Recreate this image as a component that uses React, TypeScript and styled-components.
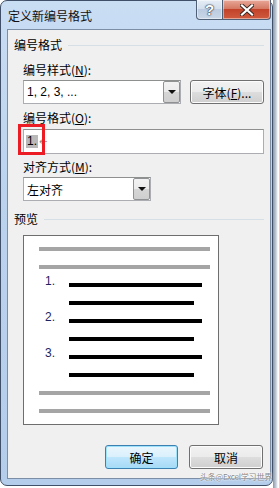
import React from "react";
import styled, { createGlobalStyle } from "styled-components";

const GlobalStyle = createGlobalStyle`
  html, body {
    margin: 0;
    padding: 0;
    background: #ffffff;
  }
  body {
    font-family: "Noto Sans CJK SC", "Liberation Sans", sans-serif;
    font-size: 12px;
    color: #000;
  }
`;

const Screen = styled.div`
  width: 279px;
  height: 488px;
  display: flex;
  overflow: hidden;
  background: #ffffff;
`;

const Window = styled.div`
  position: relative;
  width: 273px;
  height: 486px;
  box-sizing: border-box;
  border: 1px solid #3f5068;
  border-radius: 7px;
  background: linear-gradient(180deg, #c9ddf3 0%, #bcd3ee 40%, #b4cdea 100%);
  display: flex;
  flex-direction: column;
  flex-shrink: 0;
`;

const Backdrop = styled.div`
  flex: 1;
  background: linear-gradient(90deg, #8a98a8 0px, #c3ccd6 3px, #ffffff 5px);
`;

const TitleBar = styled.div`
  height: 28px;
  display: flex;
  align-items: flex-start;
  justify-content: space-between;
  padding-left: 7px;
`;

const Title = styled.div`
  font-size: 12px;
  line-height: 14px;
  margin-top: 8px;
  color: #111;
`;

const Captions = styled.div`
  display: flex;
  margin-top: -1px;
  margin-right: 1px;
`;

const CaptionButton = styled.div<{ $close?: boolean }>`
  height: 20px;
  box-sizing: border-box;
  width: ${(p) => (p.$close ? "48px" : "27px")};
  border: 1px solid #4f5f75;
  border-top: none;
  border-left-width: ${(p) => (p.$close ? "0" : "1px")};
  border-radius: ${(p) => (p.$close ? "0 0 4px 0" : "0 0 0 4px")};
  background: ${(p) =>
    p.$close
      ? "linear-gradient(180deg, #e9a899 0%, #d47a65 45%, #c2432a 50%, #d05a3e 100%)"
      : "linear-gradient(180deg, #e6eef7 0%, #d3dfec 45%, #bccbdf 50%, #c9d7e8 100%)"};
  display: flex;
  align-items: center;
  justify-content: center;
  box-shadow: inset 0 0 0 1px rgba(255, 255, 255, 0.45);
`;

const HelpMark = styled.span`
  font-family: "Liberation Sans", sans-serif;
  font-weight: bold;
  font-size: 15px;
  line-height: 16px;
  color: #ffffff;
  text-shadow: 0 0 1px #2c3b50, 0 0 1px #2c3b50, 0 0 2px #2c3b50;
`;

const Client = styled.div`
  flex: 1;
  margin: 0 1px 6px 6px;
  border: 1px solid #7b8ea6;
  background: #f0f0f0;
  display: flex;
  flex-direction: column;
  padding: 8px 6px 9px 6px;
`;

const GroupHeader = styled.div`
  display: flex;
  align-items: center;
  gap: 6px;
  line-height: 14px;
  height: 14px;
  &::after {
    content: "";
    flex: 1;
    height: 1px;
    background: #d5dfe5;
  }
`;

const Section = styled.div`
  padding-left: 9px;
  display: flex;
  flex-direction: column;
`;

const Label = styled.div<{ $top: number }>`
  line-height: 14px;
  height: 14px;
  margin-top: ${(p) => p.$top}px;
  margin-bottom: 3px;
`;

const Row = styled.div`
  display: flex;
  gap: 9px;
`;

const Combo = styled.div<{ $w: number }>`
  width: ${(p) => p.$w}px;
  height: 24px;
  box-sizing: border-box;
  border: 1px solid #abadb3;
  border-top-color: #8e8f8f;
  background: #ffffff;
  display: flex;
  align-items: center;
  padding-left: 2px;
`;

const ComboText = styled.span<{ $latin?: boolean }>`
  flex: 1;
  font-family: ${(p) =>
    p.$latin ? '"Liberation Sans", sans-serif' : '"Noto Sans CJK SC", sans-serif'};
  font-size: 12px;
  padding-left: 1px;
`;

const DropButton = styled.div`
  width: 17px;
  height: 22px;
  box-sizing: border-box;
  border: 1px solid #8f9193;
  border-radius: 2px;
  background: linear-gradient(180deg, #f2f2f2 0%, #ebebeb 50%, #d6d6d6 51%, #cfcfcf 100%);
  display: flex;
  align-items: center;
  justify-content: center;
  &::after {
    content: "";
    border-left: 4px solid transparent;
    border-right: 4px solid transparent;
    border-top: 4px solid #111;
  }
`;

const PushButton = styled.button<{ $default?: boolean }>`
  height: 24px;
  width: ${(p) => (p.$default ? "73px" : "74px")};
  box-sizing: border-box;
  border: 1px solid ${(p) => (p.$default ? "#3c7fb1" : "#707070")};
  border-radius: 3px;
  background: ${(p) =>
    p.$default
      ? "linear-gradient(180deg, #eaf6fd 0%, #d9f0fc 50%, #bee6fd 51%, #a7d9f5 100%)"
      : "linear-gradient(180deg, #f2f2f2 0%, #ebebeb 50%, #dddddd 51%, #cfcfcf 100%)"};
  box-shadow: inset 0 0 0 1px ${(p) => (p.$default ? "#9ee1fb" : "#fcfcfc")};
  font-family: "Noto Sans CJK SC", sans-serif;
  font-size: 12px;
  color: #000;
  padding: 0;
  display: flex;
  align-items: center;
  justify-content: center;
`;

const FormatField = styled.div`
  position: relative;
  height: 25px;
  box-sizing: border-box;
  margin-top: 1px;
  border: 1px solid #abadb3;
  border-top-color: #8e8f8f;
  background: #ffffff;
  display: flex;
  align-items: center;
  padding-left: 2px;
`;

const Selected = styled.span`
  font-family: "Liberation Sans", sans-serif;
  font-size: 12px;
  line-height: 13px;
  background: #b9b9b9;
  padding: 0 1px;
`;

const TabMark = styled.span`
  font-family: "DejaVu Sans", sans-serif;
  font-size: 10px;
  line-height: 12px;
  color: #8c8c8c;
  margin-left: 1px;
`;

const Callout = styled.div`
  position: absolute;
  left: -6px;
  top: -6px;
  width: 27px;
  height: 31px;
  box-sizing: border-box;
  border: 3px solid #ec1c24;
`;

const Preview = styled.div`
  width: 196px;
  height: 190px;
  box-sizing: border-box;
  margin-left: 9px;
  margin-top: 9px;
  border: 1px solid #6e6e6e;
  background: #ffffff;
  padding: 11px 0 0 15px;
  display: flex;
  flex-direction: column;
`;

const PreviewRow = styled.div<{ $first?: boolean }>`
  height: ${(p) => (p.$first ? "4px" : "18px")};
  display: flex;
  align-items: flex-end;
`;

const Num = styled.div`
  width: 30px;
  box-sizing: border-box;
  padding-left: 6px;
  font-family: "Liberation Sans", sans-serif;
  font-size: 12px;
  line-height: 11px;
  color: #1c2460;
`;

const Bar = styled.div<{ $w: number; $grey?: boolean; $indent?: boolean }>`
  width: ${(p) => p.$w}px;
  height: 4px;
  margin-left: ${(p) => (p.$indent ? "30px" : "0")};
  background: ${(p) => (p.$grey ? "#a5a5a5" : "#000000")};
`;

const Buttons = styled.div`
  margin-top: auto;
  display: flex;
  justify-content: flex-end;
  gap: 11px;
  margin-right: 1px;
`;

const Watermark = styled.div`
  position: absolute;
  right: 0px;
  bottom: 3px;
  font-size: 8px;
  line-height: 10px;
  color: #8a8a8a;
  text-shadow: 0 0 2px #ffffff, 0 0 2px #ffffff;
  letter-spacing: -0.2px;
`;

function CloseGlyph() {
  return (
    <svg width="14" height="12" viewBox="0 0 14 12">
      <path d="M2 1.5 L12 10.5 M12 1.5 L2 10.5" stroke="#3a2520" strokeWidth="4" strokeLinecap="square" />
      <path d="M2 1.5 L12 10.5 M12 1.5 L2 10.5" stroke="#ffffff" strokeWidth="2.2" strokeLinecap="square" />
    </svg>
  );
}

function App() {
  return (
    <>
      <GlobalStyle />
      <Screen>
        <Window>
          <TitleBar>
            <Title>定义新编号格式</Title>
            <Captions>
              <CaptionButton>
                <HelpMark>?</HelpMark>
              </CaptionButton>
              <CaptionButton $close>
                <CloseGlyph />
              </CaptionButton>
            </Captions>
          </TitleBar>
          <Client>
            <GroupHeader>编号格式</GroupHeader>
            <Section>
              <Label $top={11}>
                编号样式(<u>N</u>):
              </Label>
              <Row>
                <Combo $w={158}>
                  <ComboText $latin>1, 2, 3, ...</ComboText>
                  <DropButton />
                </Combo>
                <PushButton>
                  字体(<u>F</u>)...
                </PushButton>
              </Row>
              <Label $top={7}>
                编号格式(<u>O</u>):
              </Label>
              <FormatField>
                <Selected>1.</Selected>
                <TabMark>←</TabMark>
                <Callout />
              </FormatField>
              <Label $top={6}>
                对齐方式(<u>M</u>):
              </Label>
              <Combo $w={128}>
                <ComboText>左对齐</ComboText>
                <DropButton />
              </Combo>
            </Section>
            <GroupHeader style={{ marginTop: 11 }}>预览</GroupHeader>
            <Preview>
              <PreviewRow $first>
                <Bar $w={171} $grey />
              </PreviewRow>
              <PreviewRow>
                <Bar $w={171} $grey />
              </PreviewRow>
              {[1, 2, 3].map((n) => (
                <React.Fragment key={n}>
                  <PreviewRow>
                    <Num>{n}.</Num>
                    <Bar $w={133} />
                  </PreviewRow>
                  <PreviewRow>
                    <Bar $w={125} $indent />
                  </PreviewRow>
                </React.Fragment>
              ))}
              <PreviewRow>
                <Bar $w={171} $grey />
              </PreviewRow>
              <PreviewRow>
                <Bar $w={171} $grey />
              </PreviewRow>
            </Preview>
            <Buttons>
              <PushButton $default>确定</PushButton>
              <PushButton>取消</PushButton>
            </Buttons>
          </Client>
          <Watermark>头条@Excel学习世界</Watermark>
        </Window>
        <Backdrop />
      </Screen>
    </>
  );
}

export default App;
